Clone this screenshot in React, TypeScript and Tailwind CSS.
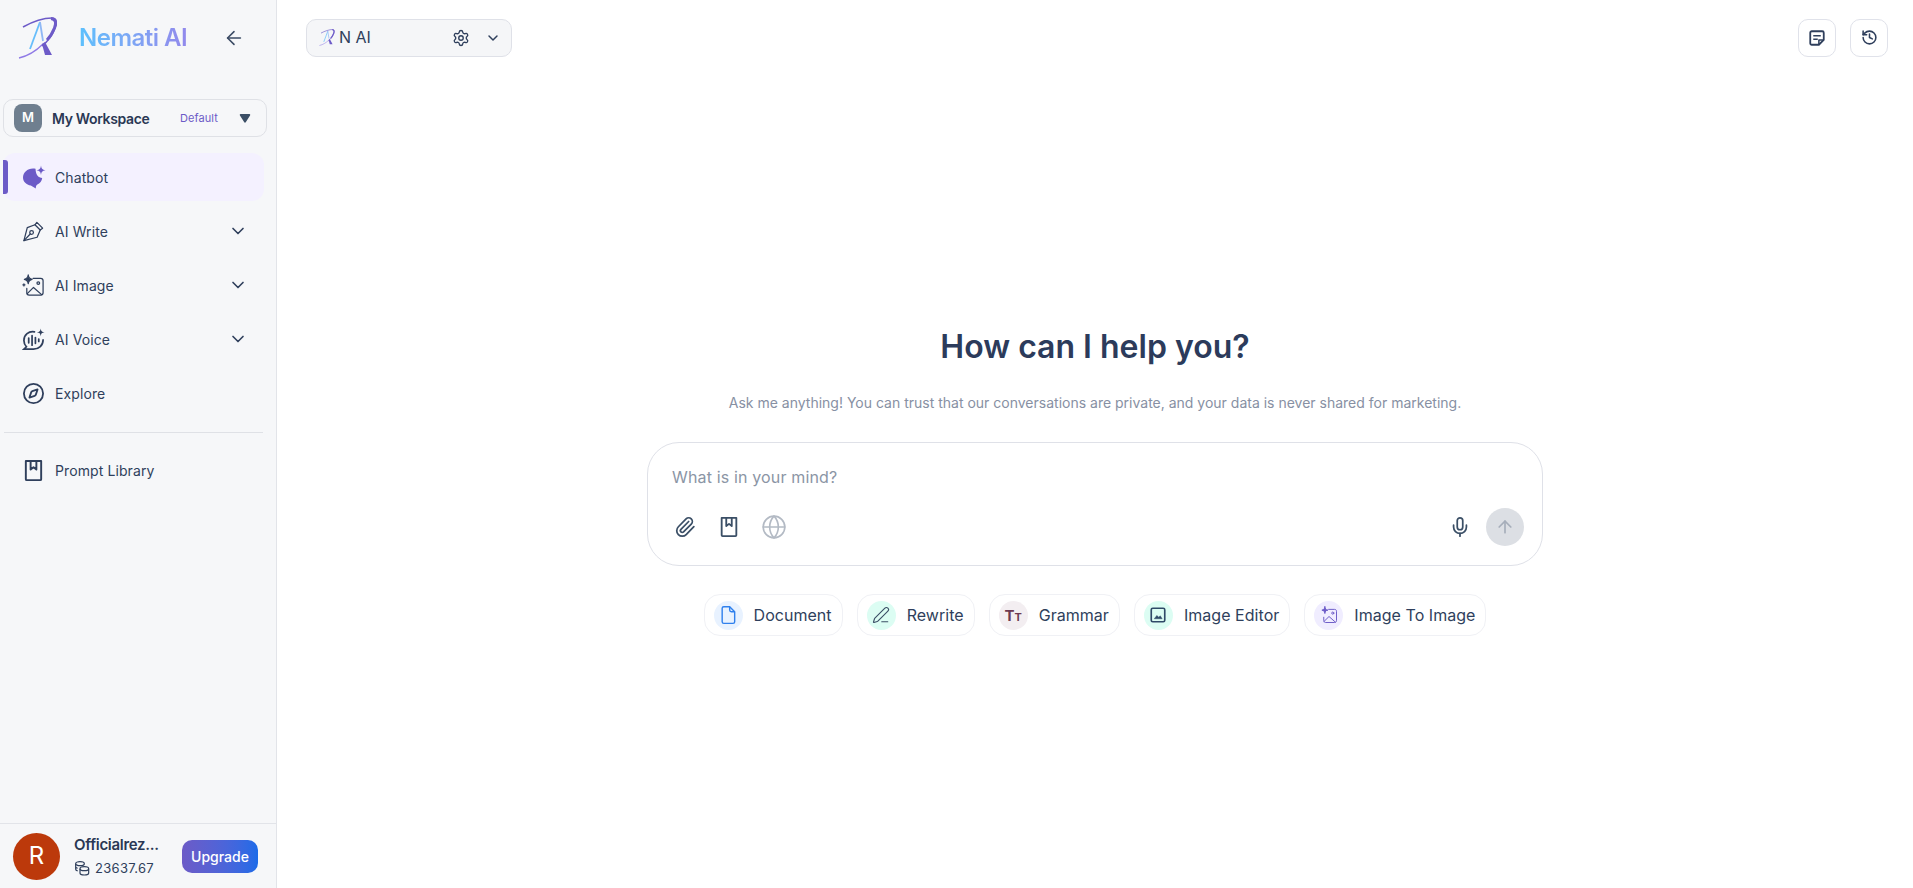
import React from "react";
import {
  ArrowLeft,
  ArrowUp,
  ChevronDown,
  Compass,
  Globe,
  History,
  Mic,
  Paperclip,
  PenLine,
  Settings,
} from "lucide-react";

const Logo = ({ className }: { className: string }) => (
  <svg viewBox="0 0 40 42" fill="none" className={className}>
    <path d="M1 41 C10 39 18 34 25 27" stroke="#8f7ae6" strokeWidth="1.3" />
    <path d="M5 10 C14 5 26 1 34 1 C39 1 39 6 37 11 C34 19 29 25 24 29" stroke="#6d5bc8" strokeWidth="1.6" />
    <path d="M33 1.5 C38 2 38.5 6 36.5 11 C34.5 16 32 20 29 23" stroke="#6d5bc8" strokeWidth="3" />
    <path d="M22 5 L12 32" stroke="#66bdfb" strokeWidth="1.8" />
    <path d="M22 5 L25 24" stroke="#8fb8f5" strokeWidth="1.8" />
    <path d="M24 27 L27 38 L34 38 L27 25" fill="#6d5bc8" />
  </svg>
);

const ChatbotIcon = () => (
  <svg viewBox="0 0 24 24" className="w-[24px] h-[24px] shrink-0" fill="#6c5bc7">
    <path d="M11 3.5 C5.3 3.5 1 7.6 1 12.6 C1 16.8 4.4 20 8.8 20.6 L13.8 23.6 C13.8 22 14 20.8 15 19.8 C18 18.3 20 16 20.2 13 C16.5 12.8 13.8 10.4 13.5 3.8 C12.6 3.6 11.8 3.5 11 3.5Z" />
    <path d="M19 0.5 C19.4 3.6 20.2 4.6 23.5 5.2 C20.2 5.8 19.4 6.8 19 10 C18.6 6.8 17.8 5.8 14.5 5.2 C17.8 4.6 18.6 3.6 19 0.5Z" />
  </svg>
);

const PenIcon = () => (
  <svg viewBox="0 0 24 24" className="w-[23px] h-[23px] shrink-0" fill="none" stroke="#2f3f5c" strokeWidth="1.3" strokeLinejoin="round" strokeLinecap="round">
    <path d="M15.5 2.5 L21.5 8.5 L19 10.5 L13.5 5Z" />
    <path d="M13.5 5 L5.5 8 L2 21.5 L15.8 18 L19 10.5" />
    <path d="M2 21.5 L8.6 14.6" />
    <circle cx="10" cy="13" r="1.9" />
  </svg>
);

const ImageSparkIcon = () => (
  <svg viewBox="0 0 24 24" className="w-[23px] h-[23px] shrink-0" fill="none" stroke="#2f3f5c" strokeWidth="1.3" strokeLinejoin="round" strokeLinecap="round">
    <path d="M11.5 4.5 H19.5 C21 4.5 22 5.5 22 7 V19.5 C22 21 21 22 19.5 22 H7.5 C6 22 5 21 5 19.5 V15" />
    <path d="M5.5 20.5 L12 14 L20.5 21.5" />
    <circle cx="17" cy="9.5" r="1.4" />
    <path d="M6.5 1 C6.9 4 7.6 4.9 10.5 5.5 C7.6 6.1 6.9 7 6.5 10 C6.1 7 5.4 6.1 2.5 5.5 C5.4 4.9 6.1 4 6.5 1Z" fill="#2f3f5c" />
    <path d="M2 10.2 V12.4 M0.9 11.3 H3.1" />
  </svg>
);

const VoiceIcon = () => (
  <svg viewBox="0 0 24 24" className="w-[23px] h-[23px] shrink-0" fill="none" stroke="#2f3f5c" strokeWidth="1.8" strokeLinecap="round">
    <path d="M13 4 C7 3 2 7 2 13 C2 15.6 3 17.8 4.6 19.6 L2 22 H12 C17.5 22 22 18 22 12.5" />
    <path d="M7 10.5 V15.5 M10.5 8 V18 M14 10 V16 M17.5 11.5 V14" />
    <path d="M19.5 0.5 C19.9 3.2 20.6 4.1 23.5 4.5 C20.6 4.9 19.9 5.8 19.5 8.5 C19.1 5.8 18.4 4.9 15.5 4.5 C18.4 4.1 19.1 3.2 19.5 0.5Z" fill="#2f3f5c" stroke="none" />
  </svg>
);

const BookIcon = ({ className }: { className: string }) => (
  <svg viewBox="0 0 24 24" className={className} fill="none" stroke="currentColor" strokeWidth="2" strokeLinejoin="round">
    <path d="M4 2 H20 V21 C20 21.6 19.6 22 19 22 H5 C4.4 22 4 21.6 4 21Z" />
    <path d="M9 2 V11 L12 8.6 L15 11 V2" />
  </svg>
);

const NoteIcon = () => (
  <svg viewBox="0 0 24 24" className="w-[18px] h-[18px]" fill="none" stroke="#2f3f5c" strokeWidth="2.4" strokeLinejoin="round">
    <path d="M3 5 C3 3.9 3.9 3 5 3 H19 C20.1 3 21 3.9 21 5 V14.5 L14.5 21 H5 C3.9 21 3 20.1 3 19Z" />
    <path d="M7 9 H17 M7 13.5 H13" strokeWidth="2" />
    <path d="M14.5 21 V14.5 H21" strokeWidth="2" />
  </svg>
);

const CoinsIcon = () => (
  <svg viewBox="0 0 24 24" className="w-[16px] h-[16px] shrink-0" fill="none" stroke="#2f3f5c" strokeWidth="1.8">
    <ellipse cx="9" cy="5.5" rx="6.5" ry="3" />
    <path d="M2.5 5.5 V14 C2.5 15 3.5 16 5.5 16.4 M2.5 10 C2.5 11 3.5 12 5.5 12.4" />
    <ellipse cx="15.5" cy="13" rx="6.5" ry="3" />
    <path d="M9 13 V19.5 C9 21 12 22.5 15.5 22.5 C19 22.5 22 21 22 19.5 V13" />
  </svg>
);

const DocIcon = () => (
  <svg viewBox="0 0 24 24" className="w-[20px] h-[20px]" fill="none" stroke="#2f80ed" strokeWidth="1.7" strokeLinejoin="round">
    <path d="M5 4 C5 2.9 5.9 2 7 2 H14 L20 8 V20 C20 21.1 19.1 22 18 22 H7 C5.9 22 5 21.1 5 20Z" />
    <path d="M14 2 V6 C14 7.1 14.9 8 16 8 H20" />
  </svg>
);

const PictureIcon = () => (
  <svg viewBox="0 0 24 24" className="w-[18px] h-[18px]" fill="none" stroke="#2f4a68" strokeWidth="2.2" strokeLinejoin="round">
    <rect x="3" y="3" width="18" height="18" rx="2" />
    <path d="M7 17 L10.5 12.5 L13 15 L15 13 L17.5 17Z" fill="#2f4a68" strokeWidth="0.6" />
  </svg>
);

const ImageToImageIcon = () => (
  <svg viewBox="0 0 24 24" className="w-[18px] h-[18px]" fill="none" stroke="#6c5bc7" strokeWidth="1.3" strokeLinejoin="round" strokeLinecap="round">
    <path d="M11.5 4.5 H19.5 C21 4.5 22 5.5 22 7 V19.5 C22 21 21 22 19.5 22 H7.5 C6 22 5 21 5 19.5 V15" />
    <path d="M5.5 20.5 L12 14 L20.5 21.5" />
    <circle cx="17" cy="9.5" r="1.4" />
    <path d="M6.5 1 C6.9 4 7.6 4.9 10.5 5.5 C7.6 6.1 6.9 7 6.5 10 C6.1 7 5.4 6.1 2.5 5.5 C5.4 4.9 6.1 4 6.5 1Z" fill="#6c5bc7" />
  </svg>
);

const NavRow = ({
  icon,
  label,
  arrow,
}: {
  icon: React.ReactNode;
  label: string;
  arrow?: boolean;
}) => (
  <div className="flex items-center h-[54px] pl-[22px] pr-[28px] text-[14px] tracking-[0.1px] text-[#2f3f5c]">
    {icon}
    <span className="ml-[10px]">{label}</span>
    {arrow && <ChevronDown className="ml-auto w-[20px] h-[20px]" strokeWidth={2} />}
  </div>
);

const Pill = ({
  icon,
  bg,
  label,
}: {
  icon: React.ReactNode;
  bg: string;
  label: string;
}) => (
  <div className="flex items-center h-[42px] pl-[9px] pr-[10px] gap-[11px] border border-[#f0f1f5] rounded-[16px] text-[16px] text-[#2f3f5c]">
    <div className={`w-[29px] h-[29px] rounded-full flex items-center justify-center ${bg}`}>
      {icon}
    </div>
    <span className="tracking-[0.04px]">{label}</span>
  </div>
);

export default function App() {
  return (
    <div className="flex h-[888px] overflow-hidden bg-white font-['Inter',sans-serif]">
      <aside className="w-[277px] shrink-0 flex flex-col bg-[#f6f7f9] border-r border-[#e2e4e9]">
        <div className="flex items-center h-[75px] pl-[18px]">
          <Logo className="w-[40px] h-[42px]" />
          <span className="ml-[21px] text-[24px] font-semibold tracking-[-0.5px] bg-gradient-to-r from-[#5cc0fd] to-[#9189ec] bg-clip-text text-transparent">
            Nemati AI
          </span>
          <ArrowLeft className="ml-[36px] w-[22px] h-[22px] text-[#3b4b64]" strokeWidth={1.7} />
        </div>
        <div className="mt-[24px] mx-[3px] w-[264px] h-[38px] flex items-center border border-[#dfe1e6] rounded-[10px] pl-[10px] pr-[15px]">
          <div className="w-[28px] h-[28px] rounded-[8px] bg-[#6f7f8f] text-white text-[13px] font-semibold flex items-center justify-center">
            M
          </div>
          <span className="ml-[10px] text-[14px] tracking-[-0.35px] font-semibold text-[#2a3854]">My Workspace</span>
          <span className="ml-auto text-[11px] tracking-[0.1px] text-[#6c5bc7]">Default</span>
          <svg viewBox="0 0 12 10" className="ml-[21px] w-[12px] h-[9px]" fill="#3b4f66">
            <path d="M1 0 H11 C11.8 0 12 1 11.6 1.6 L7 9 C6.5 9.8 5.5 9.8 5 9 L0.4 1.6 C0 1 0.2 0 1 0Z" />
          </svg>
        </div>
        <div className="relative mt-[16px] mx-[3px] w-[261px] h-[48px] rounded-[12px] bg-[#f4f1ff] flex items-center pl-[19px] text-[14px] tracking-[0.1px] text-[#2f3f5c]">
          <div className="absolute left-0 top-[7px] w-[5px] h-[34px] bg-[#6c5bc7] rounded-r-[3px]" />
          <ChatbotIcon />
          <span className="ml-[9px]">Chatbot</span>
        </div>
        <div className="mt-[3px]">
          <NavRow icon={<PenIcon />} label="AI Write" arrow />
          <NavRow icon={<ImageSparkIcon />} label="AI Image" arrow />
          <NavRow icon={<VoiceIcon />} label="AI Voice" arrow />
          <NavRow
            icon={<Compass className="w-[23px] h-[23px] shrink-0" strokeWidth={1.9} />}
            label="Explore"
          />
        </div>
        <div className="mt-[12px] mx-[4px] w-[259px] border-t border-[#dfe1e6]" />
        <div className="mt-[10px]">
          <NavRow icon={<BookIcon className="w-[23px] h-[23px] shrink-0" />} label="Prompt Library" />
        </div>
        <div className="mt-auto h-[65px] border-t border-[#e2e4e9] flex items-center pl-[13px] pr-[18px]">
          <div className="w-[47px] h-[47px] rounded-full bg-[#bc390b] text-white text-[24px] flex items-center justify-center">
            R
          </div>
          <div className="ml-[14px] w-[90px]">
            <div className="text-[15px] tracking-[-0.3px] font-semibold text-[#2a3854] whitespace-nowrap">Officialrez...</div>
            <div className="flex items-center gap-[5px] text-[13px] tracking-[0.3px] text-[#2f3f5c] mt-[2px]">
              <CoinsIcon />
              23637.67
            </div>
          </div>
          <button className="ml-auto w-[76px] h-[33px] rounded-[10px] bg-gradient-to-r from-[#6c5bc7] to-[#1a6be8] text-white text-[14px] font-medium">
            Upgrade
          </button>
        </div>
      </aside>
      <main className="flex-1 flex flex-col min-w-0">
        <div className="flex items-center justify-between h-[75px] pl-[29px] pr-[25px]">
          <div className="w-[206px] h-[38px] flex items-center pl-[12px] pr-[10px] bg-[#f5f6f8] border border-[#dfe1e8] rounded-[10px] text-[16px] text-[#2f3f5c]">
            <Logo className="w-[16px] h-[17px]" />
            <span className="ml-[4px] -mt-[1px]">N AI</span>
            <Settings className="ml-auto w-[18px] h-[18px]" strokeWidth={1.8} />
            <ChevronDown className="ml-[15px] w-[16px] h-[16px]" strokeWidth={2.2} />
          </div>
          <div className="flex gap-[14px]">
            <div className="w-[38px] h-[38px] flex items-center justify-center border border-[#e0e2ea] rounded-[10px]">
              <NoteIcon />
            </div>
            <div className="w-[38px] h-[38px] flex items-center justify-center border border-[#e0e2ea] rounded-[10px]">
              <History className="w-[17px] h-[17px] text-[#2f3f5c]" strokeWidth={2.2} />
            </div>
          </div>
        </div>
        <div className="flex flex-col items-center pt-[250px]">
          <h1 className="text-[32px] leading-[44px] font-semibold text-[#2c3b5b]">How can I help you?</h1>
          <p className="mt-[24px] text-[14px] leading-[20px] text-[#8790a3]">
            Ask me anything! You can trust that our conversations are private, and your data is never shared for marketing.
          </p>
          <div className="mt-[29px] w-[896px] h-[124px] border border-[#dfe1e8] rounded-[32px] pl-[24px] pr-[18px] pt-[22px] flex flex-col">
            <div className="text-[16px] leading-[24px] tracking-[0.15px] text-[#8b95a5]">What is in your mind?</div>
            <div className="flex items-center mt-[19px] text-[#3b4f66]">
              <Paperclip className="ml-[2px] w-[22px] h-[22px]" strokeWidth={1.9} />
              <BookIcon className="ml-[22px] w-[22px] h-[22px]" />
              <Globe className="ml-[21px] w-[26px] h-[26px] text-[#b3bac4]" strokeWidth={1.5} />
              <Mic className="ml-auto w-[22px] h-[22px]" strokeWidth={1.9} />
              <div className="ml-[15px] w-[38px] h-[38px] rounded-full bg-[#dcdfe4] flex items-center justify-center">
                <ArrowUp className="w-[20px] h-[20px] text-[#a6aeba]" strokeWidth={2} />
              </div>
            </div>
          </div>
          <div className="mt-[28px] flex gap-[14px]">
            <Pill icon={<DocIcon />} bg="bg-[#e8f2ff]" label="Document" />
            <Pill icon={<PenLine className="w-[18px] h-[18px] text-[#3b4f66]" strokeWidth={1.5} />} bg="bg-[#dcfdf3]" label="Rewrite" />
            <Pill
              icon={
                <span className="font-bold text-[#6d3a52] flex items-baseline text-[15px] leading-none">
                  T<span className="text-[11px]">T</span>
                </span>
              }
              bg="bg-[#f3eef1]"
              label="Grammar"
            />
            <Pill icon={<PictureIcon />} bg="bg-[#dcfdf3]" label="Image Editor" />
            <Pill icon={<ImageToImageIcon />} bg="bg-[#f0edff]" label="Image To Image" />
          </div>
        </div>
      </main>
    </div>
  );
}
